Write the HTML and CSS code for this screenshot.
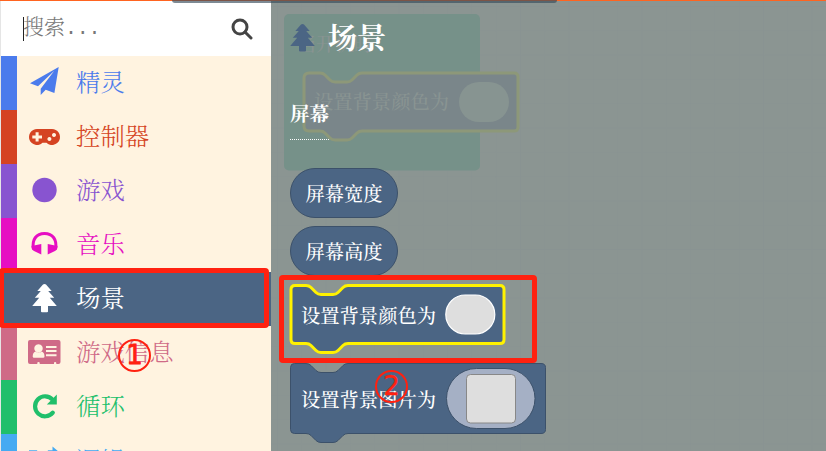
FILE: index.html
```html
<!DOCTYPE html>
<html lang="zh-CN">
<head>
<meta charset="utf-8">
<title>场景</title>
<link rel="stylesheet" href="styles.css">
</head>
<body>
<div class="editor">
  <aside class="toolbox">
    <div class="search">
      <span class="caret"></span><span class="placeholder">搜索<span class="dots">...</span></span>
      <svg class="search-icon" viewBox="0 0 22 22"><circle cx="9" cy="9" r="7" /><path d="M14 14l6 6"/></svg>
    </div>
    <nav class="categories">
      <div class="category sprites"><svg class="icon" viewBox="0 0 34 34"><path d="M33.700 2 5 18.300 13 21.300 29.300 5.700 15.700 23.700V30l5-5.300 8.700 3.300z"/></svg><span>精灵</span></div>
      <div class="category controller"><svg class="icon" viewBox="0 0 34 34"><path fill-rule="evenodd" d="M12 10h15a8 8 0 1 1-5.500 13.800h-4A8 8 0 1 1 12 10zm-1.400 3.200v3.200H7.300v3h3.300v3.200h3v-3.200H17v-3h-3.400v-3.200zM29 14a2 2 0 1 0 .01 0zm-4.600 4a2 2 0 1 0 .01 0z"/></svg><span>控制器</span></div>
      <div class="category game"><svg class="icon" viewBox="0 0 34 34"><circle cx="19.500" cy="17" r="12.200"/></svg><span>游戏</span></div>
      <div class="category music"><svg class="icon" viewBox="0 0 34 34"><path class="band" d="M8.500 22.500C6.500 12.500 11.500 6.500 19.500 6.500S32.500 12.500 30.500 22.500"/><path d="M16.300 17v10.400L9 23.900q-2.500-1.200-2.500-4.900zM22.700 17v10.400l7.300-3.500q2.500-1.200 2.500-4.900z"/></svg><span>音乐</span></div>
      <div class="category scene"><svg class="icon" viewBox="0 0 34 34"><path d="M19.500 3q1 0 1.500.6l5.700 6.300h-3.500l6 6.800h-4.400l7 8.300H23v5.500q0 .8-1 .8h-5q-1 0-1-.8V25H7.200l7-8.300H9.800l6-6.800h-3.500L18 3.600q.5-.6 1.500-.6z"/></svg><span>场景</span></div>
      <div class="category info"><svg class="icon" viewBox="0 0 34 34"><path fill-rule="evenodd" d="M5 5h28.500q2 0 2 2v20q0 2-2 2H31.300v-1q0-1-1.200-1T29 28v1H14.700v-1q0-1-1.200-1t-1.200 1v1H5q-2 0-2-2V7q0-2 2-2zm8.500 4.200a4.200 4.200 0 1 0 .01 0zM10.400 16.500q-2.700 1-2.700 5 0 1.300 1.300 1.300h9.200q1.300 0 1.300-1.300 0-4-2.700-5-3.200 2.400-6.400 0zM21 11v2h10.500v-2zm0 4.100v2h10.500v-2zm0 4.100v2h10.500v-2z"/></svg><span>游戏信息</span></div>
      <div class="category loops"><svg class="icon" viewBox="0 0 34 34"><path class="loop" d="M27.500 10.600a10 10 0 1 0 .3 13"/><path d="M31.800 5.500v10h-10z"/></svg><span>循环</span></div>
      <div class="category logic"><svg class="icon" viewBox="0 0 34 34"><path class="shuffle" d="M4 9h7l13 17h5M4 26h7l4-5M20 14l4-5h5"/><path d="M27.500 3.500 34 9l-6.500 5.500zM27.500 20.500 34 26l-6.500 5.500z"/></svg><span>逻辑</span></div>
    </nav>
  </aside>
  <main class="workspace">
    <svg class="canvas" viewBox="271 0 555 451">
      <defs><pattern id="grid" x="277" y="6" width="24.300" height="24.300" patternUnits="userSpaceOnUse"><path class="grid-line" d="M0 .5h24.300M.5 0v24.300"/></pattern></defs>
      <rect x="271" width="555" height="451" fill="url(#grid)"/>
      <rect class="start" x="284" y="14" width="196" height="156.500" rx="5"/>
      <text class="dim-text" x="297" y="51" textLength="76">当开机时</text>
      <path class="dim-block" d="M309 73h11q3 0 5 2l5 5q2 2 5 2h12q3 0 5-2l5-5q2-2 5-2h152q4 0 4 4v50q0 4-4 4H362q-3 0-5 2l-5 5q-2 2-5 2h-12q-3 0-5-2l-5-5q-2-2-5-2h-11q-5 0-5-5V78q0-5 5-5z"/>
      <text class="dim-text" x="314" y="109" textLength="135">设置背景颜色为</text>
      <rect class="dim-slot" x="459" y="82" width="50" height="40" rx="20"/>
    </svg>
    <section class="flyout">
      <header class="flyout-head">
        <svg class="head-icon" viewBox="7 3 25 28"><path d="M19.500 3q1 0 1.500.6l5.700 6.300h-3.500l6 6.800h-4.400l7 8.300H23v4.500q0 1-1 1h-5q-1 0-1-1V25H7.200l7-8.300H9.800l6-6.800h-3.500L18 3.600q.5-.6 1.500-.6z"/></svg>
        <h1>场景</h1>
      </header>
      <h2>屏幕</h2>
      <div class="blocks">
        <div class="reporter">屏幕宽度</div>
        <div class="reporter">屏幕高度</div>
        <svg class="block color-block" viewBox="0 0 256 62">
          <path class="selected" d="M5 1.500h11q3 0 5 2l5 5q2 2 5 2h12q3 0 5-2l5-5q2-2 5-2h152q4 0 4 4v50q0 4-4 4H58q-3 0-5 2l-5 5q-2 2-5 2H31q-3 0-5-2l-5-5q-2-2-5-2H5q-4 0-4-4v-50q0-4 4-4z"/>
          <text x="11" y="38.500" textLength="135">设置背景颜色为</text>
          <rect class="color-slot" x="155.800" y="11" width="49" height="39" rx="19.500"/>
        </svg>
        <svg class="block image-block" viewBox="0 0 256 71">
          <path class="plain" d="M4.500.5H16q3 0 5 2l5 5q2 2 5 2h12q3 0 5-2l5-5q2-2 5-2h193q4.500 0 4.500 4v62q0 4-4.500 4H58q-3 0-5 2l-5 5q-2 2-5 2H31q-3 0-5-2l-5-5q-2-2-5-2H4.500q-4 0-4-4v-62q0-4 4-4z"/>
          <text x="11" y="43.500" textLength="135">设置背景图片为</text>
          <rect class="image-slot" x="156.500" y="5.500" width="88.500" height="60" rx="30"/>
          <rect class="image-value" x="176.500" y="11.500" width="49" height="48.500" rx="4"/>
        </svg>
      </div>
    </section>
  </main>
</div>
<div class="tab-shade"></div>
<div class="highlight highlight-category"></div>
<div class="highlight highlight-block"></div>
<div class="step step-one">1</div>
<div class="step step-two">2</div>
</body>
</html>
```
FILE: styles.css
```css
* { box-sizing: border-box; }
body {
  margin: 0;
  width: 826px;
  height: 451px;
  overflow: hidden;
  position: relative;
  background: #fff;
  font-family: "Noto Serif CJK SC", "Noto Sans CJK SC", serif;
}
.editor { display: flex; height: 451px; overflow: hidden; border-top: 1px solid #ff6420; }
.toolbox { width: 271px; flex: none; border-left: 1px solid #e5e5e5; background: #fff3e0; }
.search { height: 55px; padding: 0 18px 0 22px; display: flex; align-items: center; background: #fff; }
.caret { width: 1px; height: 24px; background: #222; }
.placeholder { flex: 1; color: #777; font-size: 21px; font-weight: 300; line-height: 30px; padding-bottom: 3px; margin-left: -1px; white-space: nowrap; }
.dots { font-family: "Liberation Mono", monospace; font-size: 20px; letter-spacing: -.3px; }
.search-icon { width: 22px; height: 22px; fill: none; stroke: #444; stroke-width: 3; stroke-linecap: round; }
.category {
  height: 54px;
  padding-left: 8px;
  padding-bottom: 2px;
  border-left: 16px solid currentColor;
  display: flex;
  align-items: center;
  font-size: 24.400px;
  font-weight: 300;
  line-height: 36px;
}
.category span { margin-left: 17px; padding-bottom: 2px; }
.icon { width: 34px; height: 34px; fill: currentColor; overflow: visible; }
.sprites { color: #4b7bec; }
.controller { color: #d54322; }
.game { color: #8854d0; }
.music { color: #e60ec2; }
.scene { color: #fff; background: #4b6584; border-left-color: #4b6584; font-weight: 400; }
.info { color: #cf6a87; }
.loops { color: #20bf6b; }
.logic { color: #45aaf2; }
.band { fill: none; stroke: currentColor; stroke-width: 3; }
.loop { fill: none; stroke: currentColor; stroke-width: 4.2; stroke-linecap: round; }
.shuffle { fill: none; stroke: currentColor; stroke-width: 3.5; }
.workspace { flex: 1; position: relative; background: #8b9592; }
.canvas { position: absolute; left: 0; top: -1px; width: 555px; height: 451px; }
.grid-line { fill: none; stroke: #869190; stroke-opacity: .4; }
.start { fill: #769189; }
.dim-block { fill: #7a868a; stroke: #8d9879; stroke-width: 3; }
.dim-text { fill: #899492; font-size: 19.300px; font-weight: 500; }
.dim-slot { fill: #879491; }
.flyout { position: relative; padding: 19px 0 0 19px; color: #fff; }
.flyout-head { display: flex; align-items: center; gap: 13px; height: 36px; }
.head-icon { width: 25px; height: 30px; fill: #4b6584; }
h1 { margin: 0; font-size: 29px; line-height: 36px; font-weight: 700; padding-bottom: 2px; }
h2 { margin: 44px 0 28px; width: 39px; height: 40px; font-size: 19.500px; line-height: 27px; font-weight: 700; border-bottom: 1px dotted #fff; white-space: nowrap; }
.blocks { display: flex; flex-direction: column; align-items: flex-start; }
.reporter {
  width: 108px;
  height: 50px;
  margin-bottom: 8px;
  border: 1px solid #3c516a;
  border-radius: 25px;
  background: #4b6584;
  font-size: 19.300px;
  line-height: 48px;
  font-weight: 500;
  text-align: center;
}
.block { width: 256px; overflow: visible; display: block; }
.block text { fill: #fff; font-size: 19.300px; font-weight: 500; }
.color-block { height: 62px; margin-bottom: 17px; }
.image-block { height: 71px; }
.selected { fill: #4b6584; stroke: #fff200; stroke-width: 3; }
.plain { fill: #4b6584; stroke: #3c516a; }
.color-slot { fill: #dedede; stroke: #fff; stroke-width: 1.200; }
.image-slot { fill: #a5b0c5; stroke: #3c516a; }
.image-value { fill: #dedede; stroke: #888; }
.tab-shade { position: absolute; left: 172px; top: 0; width: 385px; height: 3px; background: rgba(55, 75, 90, .65); border-radius: 0 0 4px 4px; }
.highlight { position: absolute; border: 5px solid #ff2110; border-radius: 4px; }
.highlight-category { left: -1px; top: 268px; width: 270px; height: 60px; }
.highlight-block { left: 279px; top: 275px; width: 258px; height: 88px; }
.step { position: absolute; width: 33px; height: 33px; border: 2px solid #ff2110; border-radius: 50%; color: #ff2110; font: 26px/29px "DejaVu Sans", sans-serif; text-align: center; }
.step-one { left: 118px; top: 339px; -webkit-text-stroke: .8px #ff2110; }
.step-two { left: 375px; top: 370px; line-height: 28px; -webkit-text-stroke: .4px #ff2110; }
```
